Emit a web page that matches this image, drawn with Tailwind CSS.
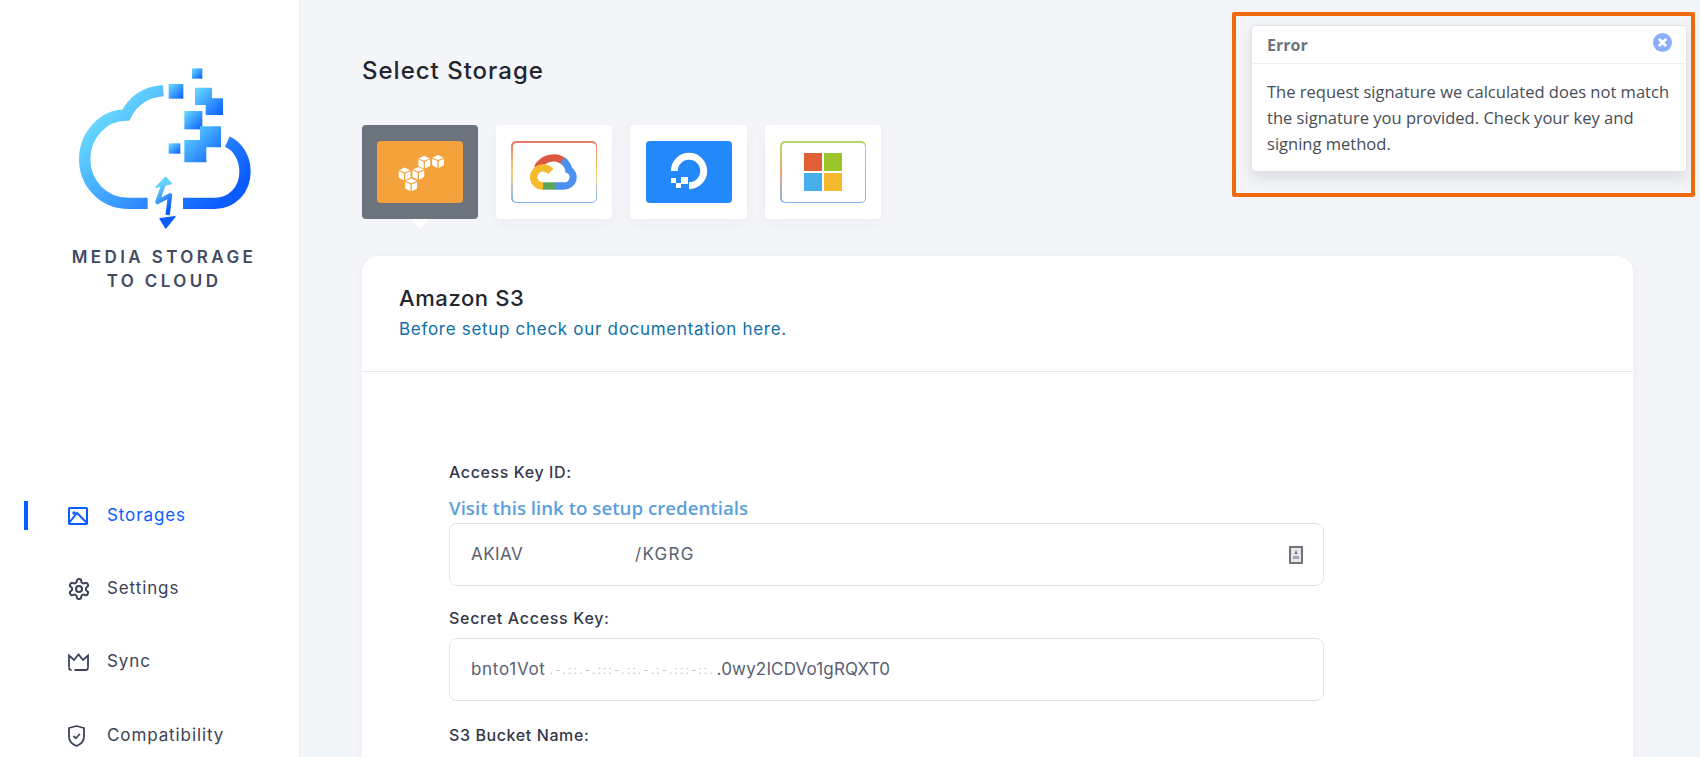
<!DOCTYPE html>
<html lang="en">
<head>
    <meta charset="UTF-8">
    <meta name="viewport" content="width=device-width, initial-scale=1.0">
    <title>Media Storage to Cloud</title>
    <script src="https://cdn.jsdelivr.net/npm/@tailwindcss/browser@4"></script>
</head>
<body class="h-screen overflow-hidden bg-[#f4f5f9] font-['Inter',sans-serif] text-[#3c4257]">

    <div class="flex h-[757px]">
        <!-- Sidebar -->
        <aside class="w-[300px] shrink-0 bg-white border-r border-[#eeeef2] pt-10">
            <svg class="block w-[300px] h-[200px]" viewBox="0 0 900 600" fill="none">
                <defs>
                    <linearGradient id="cloudGrad" gradientUnits="userSpaceOnUse" x1="300" y1="160" x2="640" y2="510">
                        <stop offset="0" stop-color="#72e6ff"/>
                        <stop offset="1" stop-color="#0b5cff"/>
                    </linearGradient>
                    <linearGradient id="pixelGrad" x1="0" y1="0" x2="1" y2="1">
                        <stop offset="0" stop-color="#6adfff"/>
                        <stop offset="1" stop-color="#0b5cff"/>
                    </linearGradient>
                    <linearGradient id="boltGrad" x1="0" y1="0" x2="0.4" y2="1">
                        <stop offset="0" stop-color="#72e0ff"/>
                        <stop offset="1" stop-color="#0b5cff"/>
                    </linearGradient>
                </defs>
                <g stroke="url(#cloudGrad)" stroke-width="34">
                    <path d="M490 152C440 156 400 180 378 225C310 225 254 285 254 358C254 430 310 490 385 490L443 490"/>
                    <path d="M682 305C715 320 735 355 735 395C735 450 695 490 645 490L549 490"/>
                </g>
                <rect x="576" y="85" width="31" height="31" fill="url(#pixelGrad)"/>
                <rect x="506" y="132" width="44" height="44" fill="url(#pixelGrad)"/>
                <path d="M585 143H636V175H669V225H617V195H585Z" fill="url(#pixelGrad)"/>
                <rect x="553" y="213" width="54" height="55" fill="url(#pixelGrad)"/>
                <path d="M600 259H663V322H619V367H553V300H600Z" fill="url(#pixelGrad)"/>
                <rect x="506" y="310" width="35" height="31" fill="url(#pixelGrad)"/>
                <path d="M497 412L468 442L515 431Z" fill="#63d4ff" stroke="#63d4ff" stroke-width="4" stroke-linejoin="round"/>
                <path d="M491 432L472 486L510 466L503 525" stroke="url(#boltGrad)" stroke-width="13" stroke-linejoin="round"/>
                <path d="M480 536L525 530L497 564Z" fill="#0b5cff" stroke="#0b5cff" stroke-width="4" stroke-linejoin="round"/>
            </svg>
            <div class="mt-[5px] pl-[29px] text-center text-[17px] leading-[24px] font-semibold tracking-[3.4px] text-[#3f4a63]">
                <div>MEDIA STORAGE</div>
                <div>TO CLOUD</div>
            </div>

            <nav class="mt-[208px] text-[17px] tracking-[0.9px]">
                <a class="relative flex items-center h-[30px] pl-[68px] gap-[19px] text-[#0b5cff]">
                    <span class="absolute left-6 top-0 w-1 h-[29px] bg-[#0b5cff]"></span>
                    <svg class="w-5 h-[18px]" viewBox="0 0 20 18" fill="none" stroke="currentColor" stroke-width="2">
                        <rect x="1" y="1" width="18" height="16" rx="0.5"/>
                        <circle cx="6" cy="6" r="1.7" fill="currentColor" stroke="none"/>
                        <path d="M1 16L9 6L19 16"/>
                    </svg>
                    Storages
                </a>
                <a class="flex items-center h-[30px] mt-[43px] pl-[67px] gap-4">
                    <svg class="w-6 h-6" viewBox="0 0 24 24" fill="none" stroke="currentColor" stroke-width="2">
                        <path d="M12.22 2h-.44a2 2 0 0 0-2 2v.18a2 2 0 0 1-1 1.73l-.43.25a2 2 0 0 1-2 0l-.15-.08a2 2 0 0 0-2.73.73l-.22.38a2 2 0 0 0 .73 2.73l.15.1a2 2 0 0 1 1 1.72v.51a2 2 0 0 1-1 1.74l-.15.09a2 2 0 0 0-.73 2.73l.22.38a2 2 0 0 0 2.73.73l.15-.08a2 2 0 0 1 2 0l.43.25a2 2 0 0 1 1 1.73V20a2 2 0 0 0 2 2h.44a2 2 0 0 0 2-2v-.18a2 2 0 0 1 1-1.73l.43-.25a2 2 0 0 1 2 0l.15.08a2 2 0 0 0 2.73-.73l.22-.39a2 2 0 0 0-.73-2.73l-.15-.08a2 2 0 0 1-1-1.74v-.5a2 2 0 0 1 1-1.74l.15-.09a2 2 0 0 0 .73-2.73l-.22-.38a2 2 0 0 0-2.73-.73l-.15.08a2 2 0 0 1-2 0l-.43-.25a2 2 0 0 1-1-1.73V4a2 2 0 0 0-2-2z"/>
                        <circle cx="12" cy="12" r="3"/>
                    </svg>
                    Settings
                </a>
                <a class="flex items-center h-[30px] mt-[43px] pl-[68px] gap-[18px]">
                    <svg class="w-[21px] h-[18px]" viewBox="0 0 21 18" fill="none" stroke="currentColor" stroke-width="1.8">
                        <path d="M1 14.5V2.5L6 7L10.5 1.5L15 7L20 2.5V14.5"/>
                        <path d="M1 14.5C1 16 2 17 3.5 17M20 14.5C20 16 19 17 17.5 17H6.5"/>
                    </svg>
                    Sync
                </a>
                <a class="flex items-center h-[30px] mt-[44px] pl-[68px] gap-[22px]">
                    <svg class="w-[17px] h-[22px]" viewBox="0 0 17 22" fill="none" stroke="currentColor" stroke-width="1.8">
                        <path d="M8.5 1L16 3V11.5C16 16 12 19.5 8.5 21C5 19.5 1 16 1 11.5V3Z" stroke-linejoin="round"/>
                        <path d="M5.5 11L7.8 13.3L11.8 9"/>
                    </svg>
                    Compatibility
                </a>
            </nav>
        </aside>

        <!-- Main -->
        <main class="flex-1 pl-[62px] pr-[67px]">
            <h1 class="mt-[56px] text-[24px] leading-[30px] font-medium tracking-[1px] text-[#23262f]">Select Storage</h1>

            <div class="mt-[39px] flex gap-[18px]">
                <div class="relative w-[116px] h-[94px] rounded-[4px] bg-[#6c757d] flex items-center justify-center">
                    <div class="w-[86px] h-[62px] rounded-[4px] bg-[#f3a23c]">
                        <svg class="w-[86px] h-[62px]" viewBox="0 0 240 189" fill="#fff">
                            <defs>
                                <g id="cube">
                                    <path d="M0 -19L17 -11L0 -4L-17 -11Z"/>
                                    <path d="M-18 -8L-2 -1V20L-18 12Z"/>
                                    <path d="M18 -8L2 -1V20L18 12Z"/>
                                </g>
                            </defs>
                            <use href="#cube" x="133" y="64"/>
                            <use href="#cube" x="175" y="62"/>
                            <use href="#cube" x="73" y="100"/>
                            <use href="#cube" x="115" y="98"/>
                            <use href="#cube" x="93" y="133"/>
                        </svg>
                    </div>
                    <span class="absolute left-[49px] top-full w-0 h-0 border-x-[9px] border-x-transparent border-t-[10px] border-t-white"></span>
                </div>

                <div class="w-[116px] h-[94px] rounded-[4px] bg-white shadow-[0_4px_12px_rgba(60,70,110,0.05)] flex items-center justify-center">
                    <div class="w-[86px] h-[62px] rounded-[5px] p-[1.5px] bg-gradient-to-b from-[#e8796a] via-[#f5d06b] to-[#7cb2ee]">
                        <div class="w-full h-full rounded-[4px] bg-white flex items-center justify-center">
                            <svg class="w-[50px] h-[38px]" viewBox="75 55 143 114" fill="none" stroke-width="22">
                                <path d="M97 100C108 75 150 55 180 84" stroke="#dc5843"/>
                                <path d="M172 76C186 88 190 98 191 106C212 116 208 154 175 154H148" stroke="#4d90f0"/>
                                <path d="M150 154H110" stroke="#5ba65a"/>
                                <path d="M114 154C86 154 79 126 92 110C105 94 125 98 137 110" stroke="#f6bb2d"/>
                            </svg>
                        </div>
                    </div>
                </div>

                <div class="w-[117px] h-[94px] rounded-[4px] bg-white shadow-[0_4px_12px_rgba(60,70,110,0.05)] flex items-center justify-center">
                    <div class="w-[86px] h-[62px] rounded-[4px] bg-[#2388f9]">
                        <svg class="w-[86px] h-[62px]" viewBox="0 0 86 62" fill="#fff">
                            <path d="M28.3 30A14.7 14.7 0 1 1 43 44.7" fill="none" stroke="#fff" stroke-width="7"/>
                            <rect x="35" y="36" width="7" height="7"/>
                            <rect x="25" y="37" width="5" height="5"/>
                            <rect x="30" y="42" width="5" height="5"/>
                        </svg>
                    </div>
                </div>

                <div class="w-[116px] h-[94px] rounded-[4px] bg-white shadow-[0_4px_12px_rgba(60,70,110,0.05)] flex items-center justify-center">
                    <div class="w-[86px] h-[62px] rounded-[5px] p-[1.5px] bg-gradient-to-b from-[#b7d66a] via-[#f0a06a] to-[#7cb2ee]">
                        <div class="w-full h-full rounded-[4px] bg-white grid grid-cols-[18px_18px] grid-rows-[18px_18px] gap-[2px] place-content-center">
                            <div class="bg-[#e05f36]"></div>
                            <div class="bg-[#9bc528]"></div>
                            <div class="bg-[#47aeec]"></div>
                            <div class="bg-[#f4b92f]"></div>
                        </div>
                    </div>
                </div>
            </div>

            <!-- Card -->
            <section class="mt-[37px] rounded-t-[16px] bg-white h-[501px] shadow-[0_2px_10px_rgba(60,70,110,0.04)]">
                <div class="h-[116px] border-b border-[#e6e7ec] pl-[37px] pt-[27px]">
                    <h2 class="text-[22px] leading-[30px] font-medium tracking-[0.6px] text-[#23262f]">Amazon S3</h2>
                    <a class="block mt-[1px] text-[17px] leading-[30px] tracking-[0.7px] text-[#0f6fa8]">Before setup check our documentation here.</a>
                </div>

                <div class="pl-[87px] pt-[89px] w-[962px]">
                    <label class="block text-[16px] leading-[22px] font-medium tracking-[0.6px] text-[#33384a]">Access Key ID:</label>
                    <a class="block mt-[12px] font-['Open_Sans',sans-serif] font-semibold text-[18.7px] leading-[26px] text-[#5c9fdd]">Visit this link to setup credentials</a>
                    <div class="mt-[2px] h-[63px] border border-[#e3e3ee] rounded-[8px] flex items-center pl-[21px] pr-5 text-[17px] text-[#5a6072]">
                        <span class="tracking-[0.4px]">AKIAV</span>
                        <span class="w-[112px]"></span>
                        <span class="tracking-[1.3px]">/KGRG</span>
                        <svg class="ml-auto w-[14px] h-[18px]" viewBox="0 0 14 18" fill="none">
                            <rect x="1" y="1" width="12" height="16" fill="#e6e8ea" stroke="#6f747c" stroke-width="2"/>
                            <path d="M7 4L8.5 8H5.5Z" fill="#6f747c"/>
                            <rect x="4" y="10" width="6" height="3" fill="#a6aab0"/>
                        </svg>
                    </div>
                    <label class="block mt-[21px] text-[16px] leading-[22px] font-medium tracking-[0.7px] text-[#33384a]">Secret Access Key:</label>
                    <div class="mt-[9px] h-[63px] border border-[#e3e3ee] rounded-[8px] flex items-center pl-[21px] pr-5 text-[17px] text-[#5a6072]">
                        <span class="tracking-[0.7px]">bnto1Vot</span>
                        <span class="w-[171px] shrink-0 text-[#c4c6ce] whitespace-nowrap text-[12px] tracking-[2px] pl-1">.-.::.-.:::-.::.-.:-.:::-::.</span>
                        <span class="tracking-[0.15px]">.0wy2ICDVo1gRQXT0</span>
                    </div>
                    <label class="block mt-[23px] text-[16px] leading-[22px] font-medium tracking-[0.6px] text-[#33384a]">S3 Bucket Name:</label>
                </div>
            </section>
        </main>
    </div>

    <!-- Error toast with the orange highlight round it -->
    <div class="absolute left-[1232px] top-3 w-[463px] h-[185px] border-[4px] border-[#f26a0f] rounded-[2px]"></div>
    <div class="absolute left-[1251px] top-[25px] w-[436px] h-[147px] rounded-[4px] bg-white border border-[#e2e3e8] shadow-[0_6px_14px_rgba(40,45,60,0.12)] font-['Open_Sans',sans-serif]">
        <div class="h-[38px] border-b border-[#eff0f3] pl-[15px] flex items-center justify-between pr-[14px]">
            <span class="text-[16px] font-bold text-[#6c757d]">Error</span>
            <span class="w-[19px] h-[19px] -mt-1 rounded-full bg-[#8aaefc] flex items-center justify-center">
                <svg class="w-[9px] h-[9px]" viewBox="0 0 10 10" stroke="#fff" stroke-width="3"><path d="M1 1L9 9M9 1L1 9"/></svg>
            </span>
        </div>
        <p class="px-[15px] pt-[15px] text-[16.55px] leading-[26px] text-[#474d57]">The request signature we calculated does not match the signature you provided. Check your key and signing method.</p>
    </div>

</body>
</html>
